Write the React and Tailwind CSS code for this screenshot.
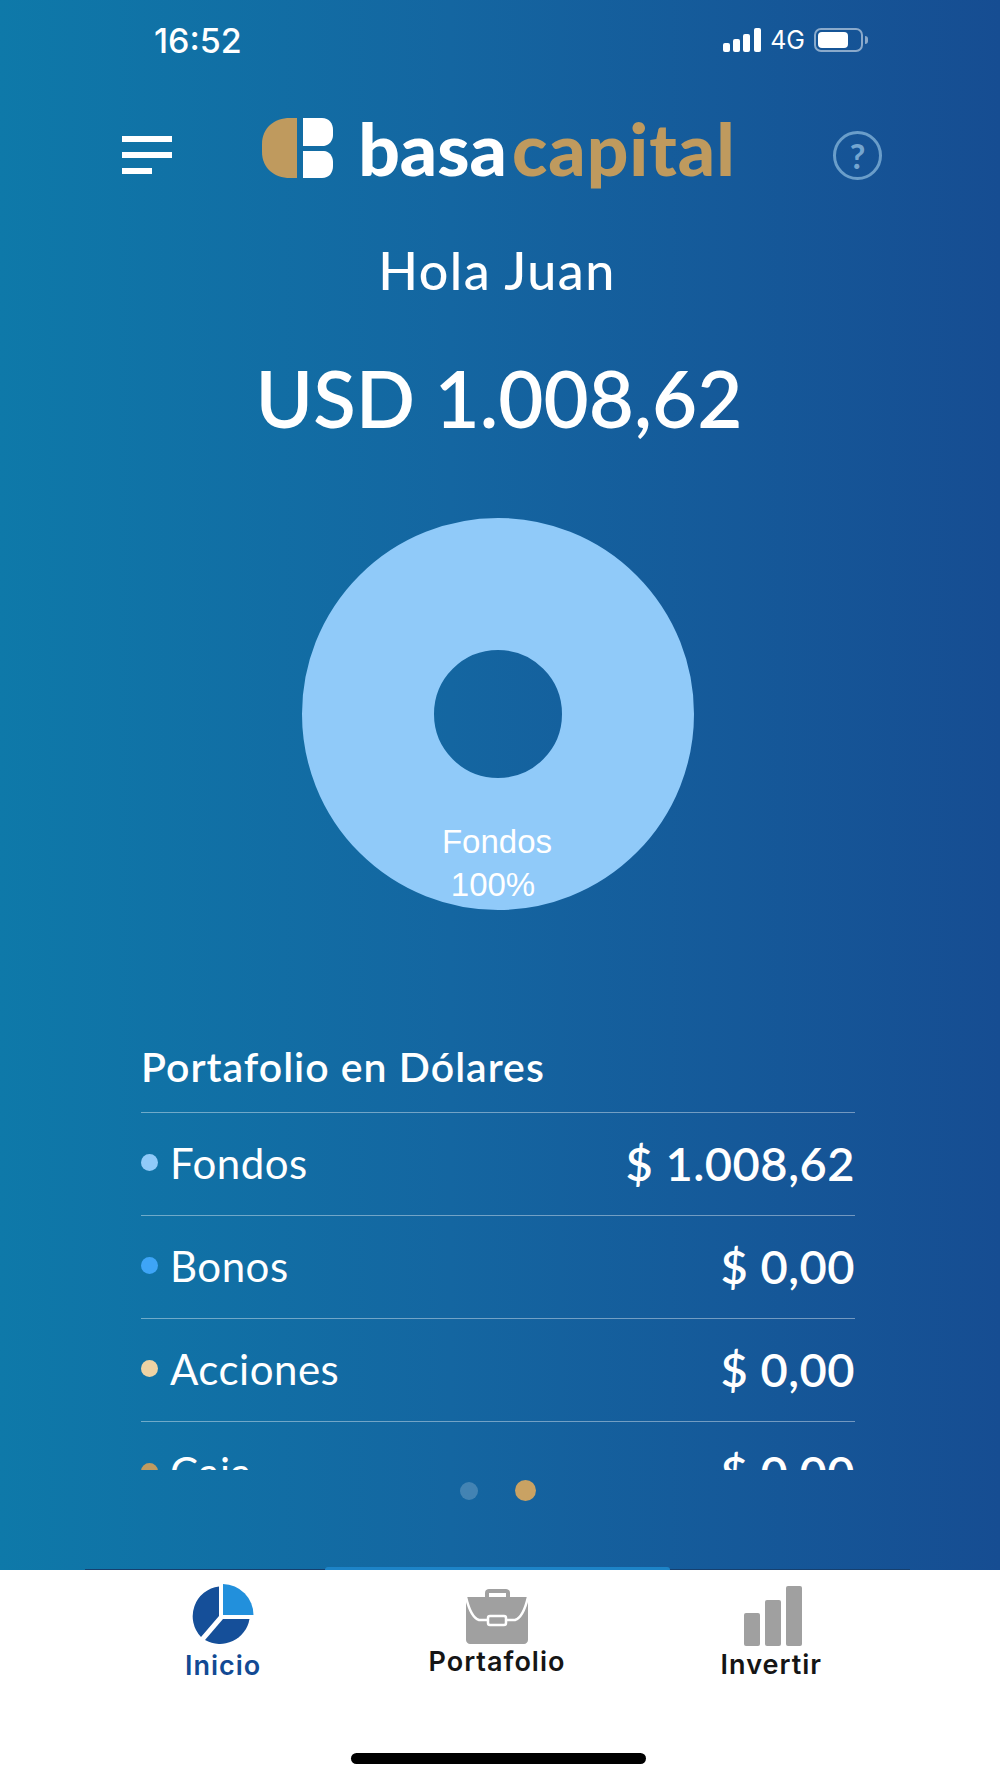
import { useState } from 'react'

const rows = [
  { name: 'Fondos', value: '$ 1.008,62', dot: 'bg-[#90caf9]' },
  { name: 'Bonos', value: '$ 0,00', dot: 'bg-[#3ea5f7]' },
  { name: 'Acciones', value: '$ 0,00', dot: 'bg-[#eed3a4]' },
  { name: 'Caja', value: '$ 0,00', dot: 'bg-[#c09b60]' },
]

function StatusBar() {
  return (
    <div className="flex h-[80px] items-start justify-between pl-[154px] pr-[132px] pt-[22px] text-white">
      <span className="font-['Inter'] text-[34px] font-medium leading-[38px]">16:52</span>
      <div className="flex items-center pt-[6px]">
        <svg width="38" height="24" viewBox="0 0 38 24" fill="#fff">
          <rect x="0" y="15" width="7" height="9" rx="2" />
          <rect x="10" y="11" width="7" height="13" rx="2" />
          <rect x="20" y="6" width="7" height="18" rx="2" />
          <rect x="31" y="0" width="7" height="24" rx="2" />
        </svg>
        <span className="ml-[9px] font-['Inter'] text-[25px] font-normal leading-[24px]">4G</span>
        <div className="ml-[9px] flex h-[24px] w-[49px] items-center rounded-[7px] border-2 border-white/50 p-[2px]">
          <div className="h-full w-[30px] rounded-[4px] bg-white" />
        </div>
        <div className="ml-[2px] h-[8px] w-[3px] rounded-r bg-white/50" />
      </div>
    </div>
  )
}

function Logo() {
  return (
    <div className="mr-[7px] flex items-end">
      <svg width="72" height="60" viewBox="0 0 72 60">
        <path d="M35 0H28C12 0 0 10 0 26V34C0 50 12 60 28 60H35Z" fill="#bf9a5e" />
        <path d="M41 0H60C67 0 71 5 71 12V17C71 23 67 27 62 28H41Z" fill="#fff" />
        <path d="M41 33H62C67 33 71 38 71 44V48C71 55 67 60 60 60H41Z" fill="#fff" />
      </svg>
      <span className="ml-[24px] font-['Lato'] text-[73px] font-black leading-[60px] text-white">
        basa<span className="ml-[5px] tracking-[1px] text-[#bf9a5e]">capital</span>
      </span>
    </div>
  )
}

function PieIcon() {
  return (
    <svg width="64" height="64" viewBox="0 0 64 64" className="mr-[3px]">
      <path d="M33 1A31 31 0 0 1 63.5 32L33 32Z" fill="#2290dc" />
      <path d="M29 3.5A30 30 0 0 0 11 54L29 33Z" fill="#154f99" />
      <path d="M33 36H59.5A30 30 0 0 1 15 57Z" fill="#154f99" />
    </svg>
  )
}

function BriefcaseIcon() {
  return (
    <svg width="64" height="56" viewBox="0 0 64 56">
      <path d="M20 9V5C20 2 22 1 24 1H40C43 1 45 2 45 5V9H41V5H24V9Z" fill="#a0a0a0" />
      <path d="M1 9H63V52C63 54 61 56 59 56H5C3 56 1 54 1 52Z" fill="#a0a0a0" />
      <path d="M1 9C4 22 8 30 14 32H23M63 9C60 22 56 30 50 32H41" stroke="#fff" strokeWidth="2.5" fill="none" />
      <rect x="23" y="28" width="18" height="9" rx="2" fill="#a0a0a0" stroke="#fff" strokeWidth="2.5" />
    </svg>
  )
}

function BarsIcon() {
  return (
    <svg width="58" height="60" viewBox="0 0 58 60" fill="#a0a0a0" className="ml-[4px]">
      <rect x="0" y="27" width="16" height="33" rx="2" />
      <rect x="21" y="14" width="16" height="46" rx="2" />
      <rect x="42" y="0" width="16" height="60" rx="2" />
    </svg>
  )
}

export default function App() {
  const [page] = useState(1)

  return (
    <div className="flex h-[1778px] w-[1000px] flex-col overflow-hidden bg-white">
      <div className="relative h-[1570px] shrink-0 bg-[linear-gradient(to_right,#0e79a9,#1466a1_45%,#164d92)]">
        <StatusBar />

        <div className="flex h-[98px] items-start justify-between pl-[122px] pr-[118px] pt-[38px]">
          <div className="mt-[18px] flex w-[50px] flex-col gap-[10px]">
            <div className="h-[6px] w-[50px] bg-white" />
            <div className="h-[6px] w-[50px] bg-white" />
            <div className="h-[6px] w-[30px] bg-white" />
          </div>
          <Logo />
          <div className="mt-[13px] flex h-[49px] w-[49px] items-center justify-center rounded-full border-[3px] border-[#8fbde0]/70 font-['Lato'] text-[34px] font-bold leading-none text-[#8fbde0]/80">
            ?
          </div>
        </div>

        <h1 className="mt-[62px] pr-[6px] text-center font-['Lato'] text-[52px] font-medium leading-[60px] tracking-[1.5px] text-white">
          Hola Juan
        </h1>
        <p className="mt-[53px] pr-[2px] text-center font-['Lato'] text-[78px] font-semibold leading-[90px] text-white">
          USD 1.008,62
        </p>

        <div className="relative mx-auto mt-[75px] h-[392px] w-[392px] -translate-x-[2px]">
          <svg width="392" height="392" viewBox="0 0 392 392">
            <circle cx="196" cy="196" r="130" fill="none" stroke="#90caf9" strokeWidth="132" />
          </svg>
          <div className="absolute left-0 top-[302px] w-[382px] text-center font-['Liberation_Sans'] text-[33px] leading-[43px] text-white">
            <div className="pl-[8px]">Fondos</div>
            <div>100%</div>
          </div>
        </div>

        <div className="ml-[141px] mr-[145px] mt-[133px]">
          <h2 className="h-[69px] font-['Lato'] text-[41px] font-semibold leading-[48px] tracking-[1px] text-white">
            Portafolio en Dólares
          </h2>
          <div className="h-[358px] overflow-hidden">
            {rows.map((row) => (
              <div key={row.name} className="flex h-[103px] items-center justify-between border-t border-white/40 pb-[3px] text-white">
                <div className="flex items-center">
                  <span className={`h-[17px] w-[17px] rounded-full ${row.dot}`} />
                  <span className="ml-[12px] font-['Lato'] text-[42px] leading-[46px] tracking-[0.5px]">{row.name}</span>
                </div>
                <span className="font-['Lato'] text-[47px] font-semibold leading-[52px] tracking-[0.5px]">{row.value}</span>
              </div>
            ))}
          </div>
        </div>

        <div className="mt-[10px] flex items-center justify-center gap-[37px] pr-[4px]">
          <span className={`h-[18px] w-[18px] rounded-full ${page === 0 ? 'bg-[#c9a263]' : 'bg-white/20'}`} />
          <span className={`h-[21px] w-[21px] rounded-full ${page === 1 ? 'bg-[#c9a263]' : 'bg-white/20'}`} />
        </div>

        <div className="absolute bottom-0 left-[85px] h-[1px] w-[825px] bg-[#16406f]" />
        <div className="absolute bottom-0 left-[325px] h-[3px] w-[345px] rounded-t-full bg-[#1d84c8]" />
      </div>

      <nav className="flex h-[160px] items-start justify-between pl-[185px] pr-[178px]">
        <button className="mt-[13px] flex flex-col items-center">
          <PieIcon />
          <span className="mt-[3px] font-['Inter'] text-[27px] font-semibold leading-[32px] tracking-[1px] text-[#124a94]">Inicio</span>
        </button>
        <button className="ml-[12px] mt-[18px] flex flex-col items-center">
          <BriefcaseIcon />
          <span className="mt-[2px] font-['Inter'] text-[27px] font-semibold leading-[32px] tracking-[1px] text-[#151515]">Portafolio</span>
        </button>
        <button className="mt-[16px] flex flex-col items-center">
          <BarsIcon />
          <span className="mt-[3px] font-['Inter'] text-[27px] font-semibold leading-[32px] tracking-[1px] text-[#151515]">Invertir</span>
        </button>
      </nav>

      <div className="mx-auto mt-[23px] h-[11px] w-[295px] -translate-x-[2px] rounded-full bg-black" />
    </div>
  )
}
